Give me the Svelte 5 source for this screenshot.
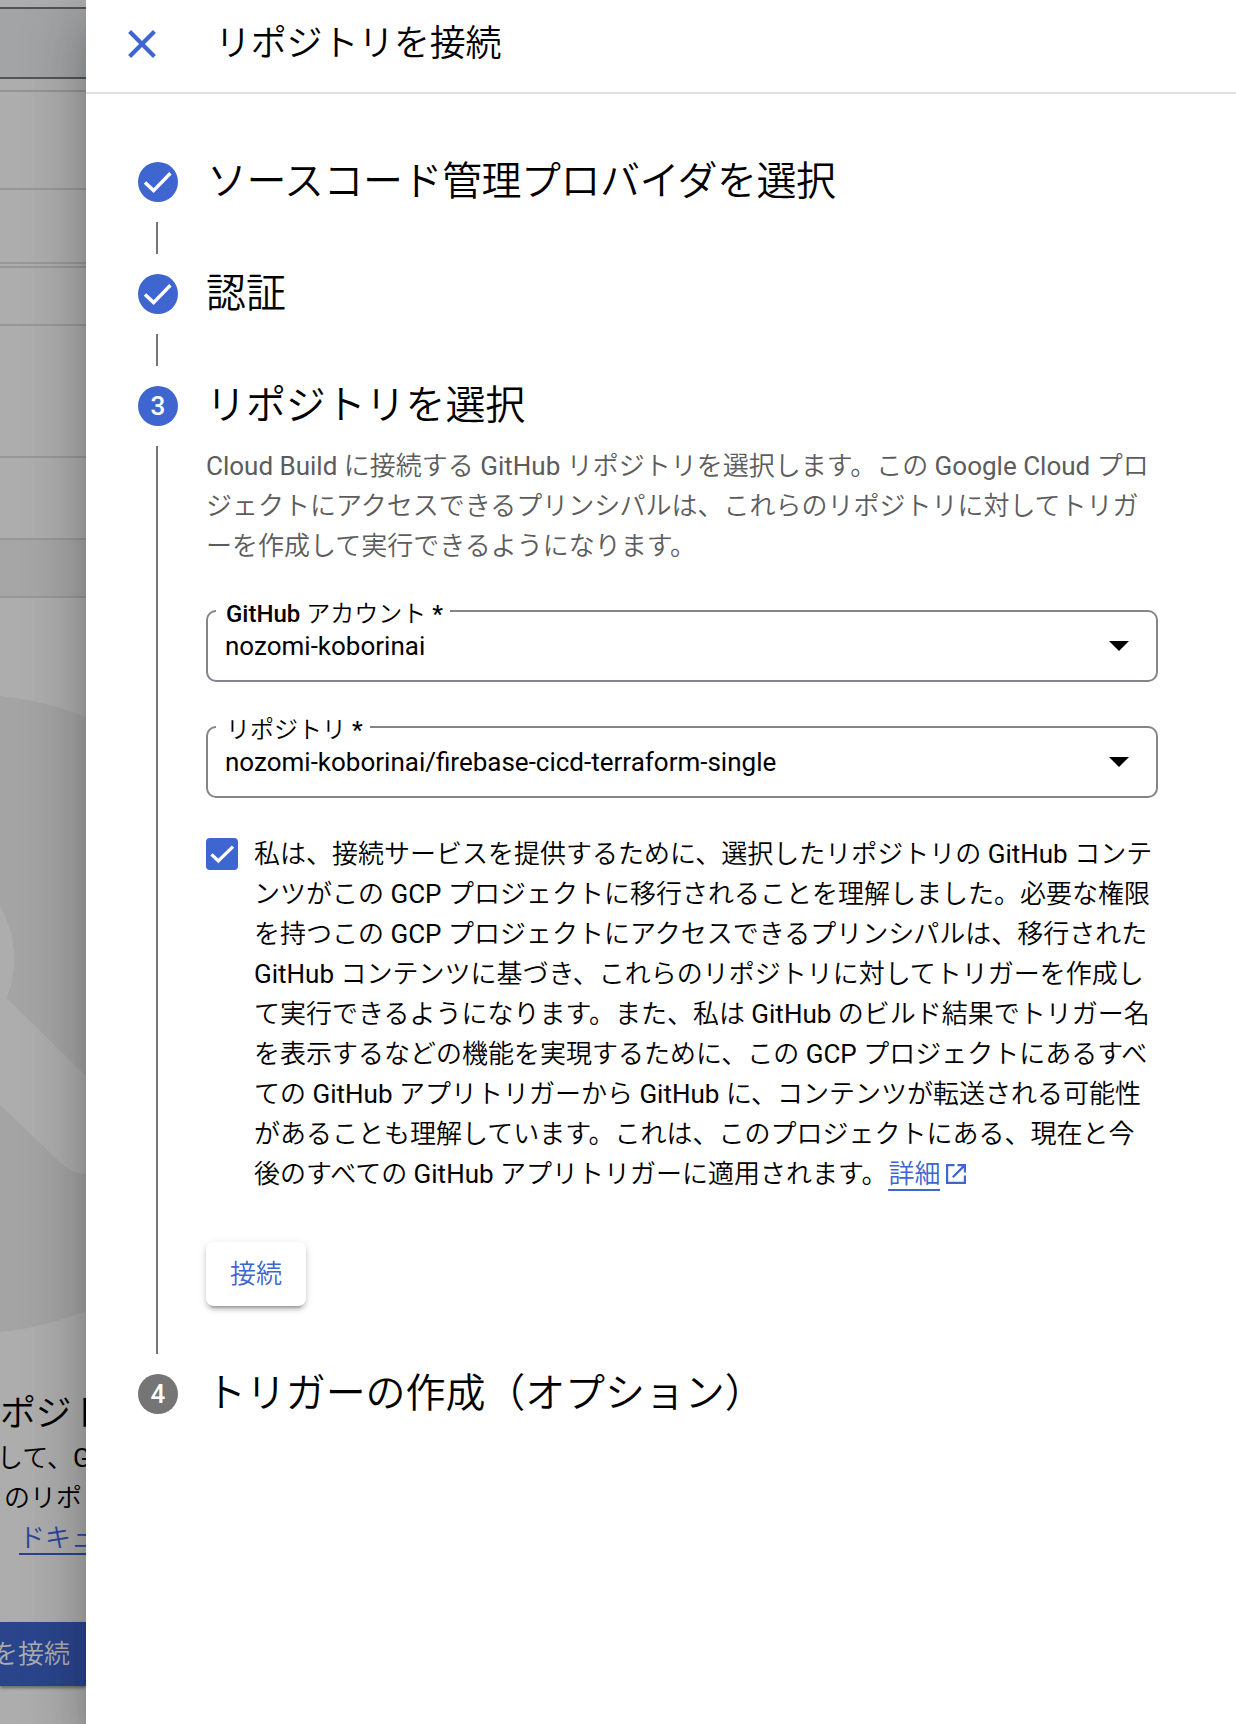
<script>
  const intro = [
    'Cloud Build に接続する GitHub リポジトリを選択します。この Google Cloud プロ',
    'ジェクトにアクセスできるプリンシパルは、これらのリポジトリに対してトリガ',
    'ーを作成して実行できるようになります。'
  ];
  const consent = [
    '私は、接続サービスを提供するために、選択したリポジトリの GitHub コンテ',
    'ンツがこの GCP プロジェクトに移行されることを理解しました。必要な権限',
    'を持つこの GCP プロジェクトにアクセスできるプリンシパルは、移行された',
    'GitHub コンテンツに基づき、これらのリポジトリに対してトリガーを作成し',
    'て実行できるようになります。また、私は GitHub のビルド結果でトリガー名',
    'を表示するなどの機能を実現するために、この GCP プロジェクトにあるすべ',
    'ての GitHub アプリトリガーから GitHub に、コンテンツが転送される可能性',
    'があることも理解しています。これは、このプロジェクトにある、現在と今'
  ];
  const fields = [
    { label: 'GitHub アカウント *', value: 'nozomi-koborinai' },
    { label: 'リポジトリ *', value: 'nozomi-koborinai/firebase-cicd-terraform-single' }
  ];

  // Latin runs take a heavier weight than the Japanese text around them.
  const runs = (text) =>
    text.split(/([ -~]+)/).filter(Boolean).map((t) => ({ t, latin: /^[ -~]/.test(t) }));
</script>

{#snippet mixed(text)}{#each runs(text) as r}{#if r.latin}<span class="latin">{r.t}</span>{:else}{r.t}{/if}{/each}{/snippet}

{#snippet check()}
  <svg class="badge" viewBox="0 0 40 40">
    <circle cx="20" cy="20" r="20" fill="#3f66d0" />
    <path d="M7 20.4 15.6 28.6 32.4 11.2" fill="none" stroke="#fff" stroke-width="3.5" />
  </svg>
{/snippet}

<div class="screen">
  <div class="backdrop">
    <div class="toolbar"></div>
    <div class="row r1"></div>
    <div class="row r2"></div>
    <div class="row r3"></div>
    <div class="row r4"></div>
    <div class="row r5"></div>
    <div class="row r6"></div>
    <div class="row r7"></div>
    <div class="row r8"></div>
    <svg class="art" viewBox="0 0 86 640">
      <circle cx="-32" cy="318" r="319.6" fill="#a4a4a4" />
      <path d="M0 210A105 105 0 0 1 6.7 302L86 380V478C77 478 69 475 61 467L0 409Z" fill="#adadad" />
    </svg>
    <div class="empty">
      <div class="empty-title">ポジト</div>
      <div class="empty-line l1">{@render mixed('して、G')}</div>
      <div class="empty-line l2">のリポ</div>
      <div class="empty-line l3"><span>ドキュ</span></div>
    </div>
    <div class="primary">を接続</div>
  </div>

  <section class="panel">
    <header>
      <svg class="close" viewBox="0 0 28 28"><path d="M1.6 1.6 26.4 26.4M26.4 1.6 1.6 26.4" stroke="#3f66d0" stroke-width="4.2" /></svg>
      <h1>リポジトリを接続</h1>
    </header>

    <ol class="steps">
      <li>
        <div class="rail">{@render check()}<i></i></div>
        <h2 class="tight">ソースコード管理プロバイダを選択</h2>
      </li>
      <li>
        <div class="rail">{@render check()}<i></i></div>
        <h2>認証</h2>
      </li>
      <li class="current">
        <div class="rail"><b class="badge num">3</b><i></i></div>
        <div class="content">
          <h2>リポジトリを選択</h2>
          <p class="intro">{#each intro as line}<span class="line">{@render mixed(line)}</span>{/each}</p>
          {#each fields as f}
            <fieldset>
              <legend>{@render mixed(f.label)}</legend>
              <div class="value">{f.value}<svg viewBox="0 0 20 10"><path d="M0 0H20L10 10Z" /></svg></div>
            </fieldset>
          {/each}
          <div class="consent">
            <svg class="box" viewBox="0 0 32 32">
              <rect width="32" height="32" rx="4" fill="#3f66d0" />
              <path d="M5.5 16.4 12.3 23 27 8.6" fill="none" stroke="#fff" stroke-width="3.3" />
            </svg>
            <p>
              {#each consent as line}<span class="line">{@render mixed(line)}</span>{/each}
              <span class="line">{@render mixed('後のすべての GitHub アプリトリガーに適用されます。')}<a href="#details">詳細</a><svg class="ext" viewBox="0 0 20 20"><path d="M8.5 1.1H1.1V18.9H18.9V11.5M11.5 1.1H18.9V8.5M18.6 1.4 6.8 13.2" fill="none" stroke="#3f66d0" stroke-width="2.2" /></svg></span>
            </p>
          </div>
          <button>接続</button>
        </div>
      </li>
      <li>
        <div class="rail"><b class="badge num idle">4</b></div>
        <h2>トリガーの作成（オプション）</h2>
      </li>
    </ol>
  </section>
</div>

<style>
  .screen {
    display: flex;
    width: 1236px;
    height: 1724px;
    overflow: hidden;
    background: #adadad;
    color: #000;
    font: 350 26px/40px Roboto, 'Noto Sans CJK JP', sans-serif;
  }
  .latin { font-weight: 400; white-space: pre; }
  .backdrop {
    width: 86px;
    height: 1724px;
    flex: none;
    overflow: hidden;
    white-space: nowrap;
    display: flex;
    flex-direction: column;
  }
  .toolbar { flex: none; box-sizing: border-box; height: 72px; margin-top: 7px; border: solid #50555b; border-width: 2px 0; background: #a2a4a6; }
  .row { flex: none; box-sizing: border-box; border-bottom: 2px solid #989898; }
  .r1 { height: 13px; border-color: #939495; }
  .r2 { height: 98px; }
  .r3 { height: 74px; }
  .r4 { height: 4px; }
  .r5 { height: 58px; }
  .r6 { height: 132px; }
  .r7 { height: 82px; }
  .r8 { height: 58px; background: #a6a6a6; }
  .art { display: block; width: 86px; height: 640px; margin-top: 98px; flex: none; }
  .empty { flex: none; height: 286px; padding-top: 54px; box-sizing: border-box; }
  .empty-title { font-size: 36px; line-height: 48px; letter-spacing: -0.4px; }
  .l1 { margin-left: -3px; }
  .l2 { padding-left: 4px; }
  .l3 { padding-left: 19px; color: #2b459b; }
  .l3 span { display: inline-block; height: 33px; line-height: 36px; border-bottom: 2px solid #2a4391; }
  .primary { flex: none; height: 64px; line-height: 64px; background: #2b458d; color: #adadad; box-shadow: 0 2px 3px rgba(0, 0, 0, 0.4); padding-right: 16px; display: flex; justify-content: flex-end; }
  .panel {
    position: relative;
    flex: 1;
    background: #fff;
    box-shadow: 0 16px 20px -10px rgba(0, 0, 0, 0.2), 0 32px 48px 4px rgba(0, 0, 0, 0.14), 0 12px 60px 10px rgba(0, 0, 0, 0.12);
  }
  header { height: 92px; border-bottom: 2px solid #dfdfdf; display: flex; align-items: center; padding-left: 42px; }
  .close { width: 28px; height: 28px; margin-top: -4px; }
  h1 { margin: -4px 0 0 59px; font-size: 36px; font-weight: 350; line-height: 48px; white-space: nowrap; letter-spacing: -0.2px; }
  .steps { list-style: none; margin: 0; padding: 68px 0 0 52px; }
  li { display: flex; height: 112px; }
  li.current { height: 988px; }
  .rail { width: 40px; margin-right: 28px; display: flex; flex-direction: column; align-items: center; flex: none; }
  .badge { width: 40px; height: 40px; flex: none; display: block; }
  .num { border-radius: 50%; background: #3f66d0; color: #fff; font-size: 26px; font-weight: 500; text-align: center; }
  .idle { background: #757575; }
  .rail i { width: 2px; flex: 1; margin: 20px 2px 20px 0; background: #757575; }
  h2 { margin: 0; font-size: 40px; font-weight: 350; line-height: 40px; white-space: nowrap; letter-spacing: -0.1px; }
  .tight { margin-left: 1px; letter-spacing: -0.5px; }
  .content { flex: none; width: 952px; }
  .line { display: block; white-space: nowrap; }
  .intro { margin: 20px 0 0; color: #5c5c5c; }
  fieldset { margin: 31px 0 0; padding: 0 0 0 8px; height: 85px; border: 2px solid #80868b; border-radius: 10px; box-sizing: border-box; min-width: 0; }
  legend { padding: 0 7px 0 10px; height: 28px; font-size: 24px; line-height: 34px; white-space: pre; }
  legend .latin { font-weight: 500; }
  .value { display: flex; justify-content: space-between; align-items: center; margin-top: 1px; padding: 0 27px 0 9px; font-weight: 400; line-height: 40px; }
  .value svg { width: 20px; height: 10px; }
  .consent { display: flex; gap: 16px; margin-top: 36px; }
  .box { width: 32px; height: 32px; flex: none; margin-top: 4px; }
  p { margin: 0; }
  a { display: inline-block; height: 32px; margin-left: 1px; line-height: 34px; color: #3f66d0; text-decoration: none; border-bottom: 2px solid #3f66d0; }
  .ext { width: 20px; height: 20px; margin-left: 6px; vertical-align: -1px; }
  button { display: block; width: 100px; height: 64px; margin-top: 48px; border: 0; border-radius: 8px; background: #fff; color: #3f66d0; font: inherit; box-shadow: 0 6px 2px -4px rgba(0, 0, 0, 0.2), 0 4px 4px rgba(0, 0, 0, 0.14), 0 2px 10px rgba(0, 0, 0, 0.12); }
</style>
